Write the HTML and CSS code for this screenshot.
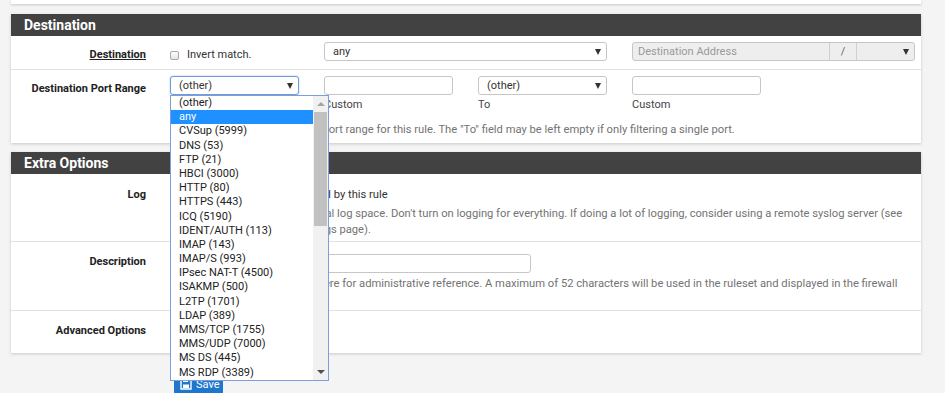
FILE: index.html
```html
<!DOCTYPE html>
<html lang="en">
<head>
    <meta charset="UTF-8">
    <meta name="viewport" content="width=device-width, initial-scale=1.0">
    <title>Firewall: Rules: Edit</title>
    <link rel="stylesheet" href="styles.css">
</head>
<body>
    <div class="panel panel-prev"></div>

    <div class="panel">
        <div class="panel-heading">Destination</div>

        <div class="form-row row-dest">
            <div class="row-label"><span class="help-link">Destination</span></div>
            <div class="row-body cols">
                <label class="check-line"><span class="checkbox"></span>Invert match.</label>
                <div class="select span-2"><span>any</span><i class="caret"></i></div>
                <div class="addr-group span-2">
                    <span class="addr-input">Destination Address</span>
                    <span class="addr-slash">/</span>
                    <span class="addr-mask"><i class="caret"></i></span>
                </div>
            </div>
        </div>

        <div class="form-row row-port">
            <div class="row-label">Destination Port Range</div>
            <div class="row-body">
                <div class="cols">
                    <div class="field field-open">
                        <div class="select focused"><span>(other)</span><i class="caret"></i></div>
                        <div class="dropdown">
                            <ul class="dropdown-list">
                                <li>(other)</li>
                                <li class="active">any</li>
                                <li>CVSup (5999)</li>
                                <li>DNS (53)</li>
                                <li>FTP (21)</li>
                                <li>HBCI (3000)</li>
                                <li>HTTP (80)</li>
                                <li>HTTPS (443)</li>
                                <li>ICQ (5190)</li>
                                <li>IDENT/AUTH (113)</li>
                                <li>IMAP (143)</li>
                                <li>IMAP/S (993)</li>
                                <li>IPsec NAT-T (4500)</li>
                                <li>ISAKMP (500)</li>
                                <li>L2TP (1701)</li>
                                <li>LDAP (389)</li>
                                <li>MMS/TCP (1755)</li>
                                <li>MMS/UDP (7000)</li>
                                <li>MS DS (445)</li>
                                <li>MS RDP (3389)</li>
                            </ul>
                            <div class="scrollbar">
                                <span class="scroll-btn"><i class="arrow-up"></i></span>
                                <span class="scroll-thumb"></span>
                                <span class="scroll-btn scroll-btn-down"><i class="arrow-down"></i></span>
                            </div>
                        </div>
                    </div>
                    <div class="field">
                        <input type="text" class="text-input">
                        <span class="field-note">Custom</span>
                    </div>
                    <div class="field">
                        <div class="select"><span>(other)</span><i class="caret"></i></div>
                        <span class="field-note">To</span>
                    </div>
                    <div class="field">
                        <input type="text" class="text-input">
                        <span class="field-note">Custom</span>
                    </div>
                </div>
                <p class="help">Specify the destination port or port range for this rule. The "To" field may be left empty if only filtering a single port.</p>
            </div>
        </div>
    </div>

    <div class="panel">
        <div class="panel-heading">Extra Options</div>

        <div class="form-row row-log">
            <div class="row-label">Log</div>
            <div class="row-body">
                <label class="check-line"><span class="checkbox"></span>Log packets that are handled by this rule</label>
                <p class="help">Hint: the firewall has limited local log space. Don't turn on logging for everything. If doing a lot of logging, consider using a remote syslog server (see the Status: System Logs: Settings page).</p>
            </div>
        </div>

        <div class="form-row row-descr">
            <div class="row-label">Description</div>
            <div class="row-body">
                <input type="text" class="text-input descr-input">
                <p class="help">A description may be entered here for administrative reference. A maximum of 52 characters will be used in the ruleset and displayed in the firewall log.</p>
            </div>
        </div>

        <div class="form-row row-adv">
            <div class="row-label">Advanced Options</div>
            <div class="row-body">
                <button class="btn btn-success">&#9881; Display Advanced</button>
            </div>
        </div>
    </div>

    <div class="save-bar">
        <button class="btn btn-primary">
            <svg class="save-icon" width="12" height="12" viewBox="0 0 12 12">
                <path d="M1 1h8.5L11 2.5V11H1z" fill="none" stroke="#fff" stroke-width="1.4"/>
                <rect x="3" y="1" width="5" height="3" fill="#fff"/>
                <rect x="3" y="6.5" width="6" height="3.5" fill="#fff"/>
            </svg>
            Save
        </button>
    </div>
</body>
</html>
```

FILE: styles.css
```css
html, body {
    overflow: hidden;
}
body {
    margin: 0;
    padding: 0;
    font-family: Roboto, "Noto Sans", sans-serif;
    font-size: 11px;
    color: #333;
    background-color: #f4f4f4;
}
.panel {
    width: 910px;
    margin: 0 0 9px 11px;
    background-color: white;
    box-shadow: 0 1px 3px rgba(0,0,0,0.18);
}
.panel-prev {
    height: 4px;
    margin-bottom: 10px;
}
.panel-heading {
    height: 22px;
    line-height: 22px;
    padding: 0 13px;
    background-color: #424242;
    color: white;
    font-size: 14px;
    font-weight: bold;
}

/* form rows */
.form-row {
    display: flex;
    border-bottom: 1px solid #e2e2e2;
}
.form-row:last-child {
    border-bottom: none;
}
.row-label {
    width: 147px;
    flex: none;
    box-sizing: border-box;
    padding: 10px 12px 0 0;
    text-align: right;
    font-weight: bold;
    line-height: 16px;
    color: #222;
}
.help-link {
    text-decoration: underline;
}
.row-body {
    flex: 1;
    padding: 6px 5px 0 12px;
}
.cols {
    display: grid;
    grid-template-columns: repeat(5, 129px);
    column-gap: 25px;
    align-items: start;
}
.span-2 {
    grid-column: span 2;
}

.row-dest .row-label { padding-top: 11px; }
.row-dest .row-body { padding-bottom: 8px; grid-auto-rows: 19px; }
.row-port .row-label { padding-top: 11px; }
.row-port .row-body { padding-bottom: 5px; }
.row-port .help { margin-top: 9px; }
.row-log .row-label { padding-top: 13px; }
.row-log .row-body { padding-top: 13px; padding-bottom: 3px; }
.row-descr .row-label { padding-top: 12px; }
.row-descr .row-body { padding-top: 12px; padding-bottom: 2px; }
.row-adv .row-label { padding-top: 12px; }
.row-adv .row-body { padding-top: 8px; padding-bottom: 12px; }

/* controls */
.check-line {
    display: flex;
    align-items: center;
    line-height: 16px;
    color: #333;
    white-space: nowrap;
}
.row-log .check-line {
    font-size: 11.2px;
}
.row-dest .check-line {
    margin-top: 5px;
}
.checkbox {
    flex: none;
    width: 9px;
    height: 9px;
    margin-right: 8px;
    border: 1px solid #a9a9a9;
    border-radius: 2px;
    box-sizing: border-box;
    background: linear-gradient(#fcfcfc, #e6e6e6);
}
.select {
    height: 19px;
    box-sizing: border-box;
    display: flex;
    align-items: center;
    padding: 0 5px 0 8px;
    border: 1px solid #c6c6c6;
    border-radius: 3px;
    background-color: white;
    color: #333;
}
.select span {
    flex: 1;
}
.select.focused {
    border-color: #6f9ddc;
    box-shadow: 0 0 2px rgba(102,160,233,0.6);
}
.caret {
    width: 0;
    height: 0;
    border-left: 3.5px solid transparent;
    border-right: 3.5px solid transparent;
    border-top: 6px solid #333;
}
.addr-group {
    height: 19px;
    box-sizing: border-box;
    display: flex;
    border: 1px solid #c6c6c6;
    border-radius: 3px;
    background-color: #eee;
    color: #999;
    line-height: 17px;
}
.addr-input {
    width: 197px;
    padding-left: 5px;
    box-sizing: border-box;
    border-right: 1px solid #d0d0d0;
}
.addr-slash {
    width: 26px;
    text-align: center;
    border-right: 1px solid #d0d0d0;
    color: #666;
}
.addr-mask {
    flex: 1;
    display: flex;
    align-items: center;
    justify-content: flex-end;
    padding-right: 5px;
}
.text-input {
    display: block;
    width: 100%;
    height: 19px;
    margin: 0;
    padding: 0 6px;
    box-sizing: border-box;
    border: 1px solid #c6c6c6;
    border-radius: 3px;
    font-family: inherit;
    font-size: 11px;
}
.descr-input {
    width: 361px;
}
.field {
    position: relative;
}
.field-note {
    display: block;
    margin-top: 2px;
    line-height: 16px;
    color: #444;
}
.help {
    margin: 8px 0 0;
    line-height: 16px;
    font-size: 11.2px;
    color: #737373;
}
.row-log .help,
.row-descr .help {
    margin-top: 3px;
}

/* open select popup */
.dropdown {
    position: absolute;
    top: 19px;
    left: 0;
    z-index: 10;
    width: 159px;
    box-sizing: border-box;
    display: flex;
    border: 1px solid #7c9fdc;
    background-color: white;
}
.dropdown-list {
    flex: 1;
    margin: 0;
    padding: 0;
    list-style: none;
}
.dropdown-list li {
    height: 14.2px;
    line-height: 14.2px;
    padding-left: 8px;
    color: #222;
    white-space: nowrap;
}
.dropdown-list li.active {
    background-color: #1e90ff;
    color: white;
}
.scrollbar {
    width: 15px;
    display: flex;
    flex-direction: column;
    background-color: #f1f1f1;
}
.scroll-btn {
    height: 15px;
    display: flex;
    align-items: center;
    justify-content: center;
}
.scroll-btn-down {
    margin-top: auto;
}
.scroll-thumb {
    height: 114px;
    margin: 1px 1px 0;
    background-color: #c1c1c1;
}
.arrow-up {
    width: 0;
    height: 0;
    border-left: 4px solid transparent;
    border-right: 4px solid transparent;
    border-bottom: 4px solid #a3a3a3;
}
.arrow-down {
    width: 0;
    height: 0;
    border-left: 4px solid transparent;
    border-right: 4px solid transparent;
    border-top: 4px solid #505050;
}

/* buttons */
.btn {
    height: 22px;
    display: flex;
    align-items: center;
    gap: 4px;
    padding: 0 6px;
    border: none;
    border-radius: 3px;
    color: white;
    font-family: inherit;
    font-size: 11px;
}
.btn-success {
    background-color: #43a047;
}
.btn-primary {
    width: 49px;
    background-color: #1e77cc;
}
.save-bar {
    padding: 11px 0 0 174px;
}
.save-icon {
    flex: none;
}
```
